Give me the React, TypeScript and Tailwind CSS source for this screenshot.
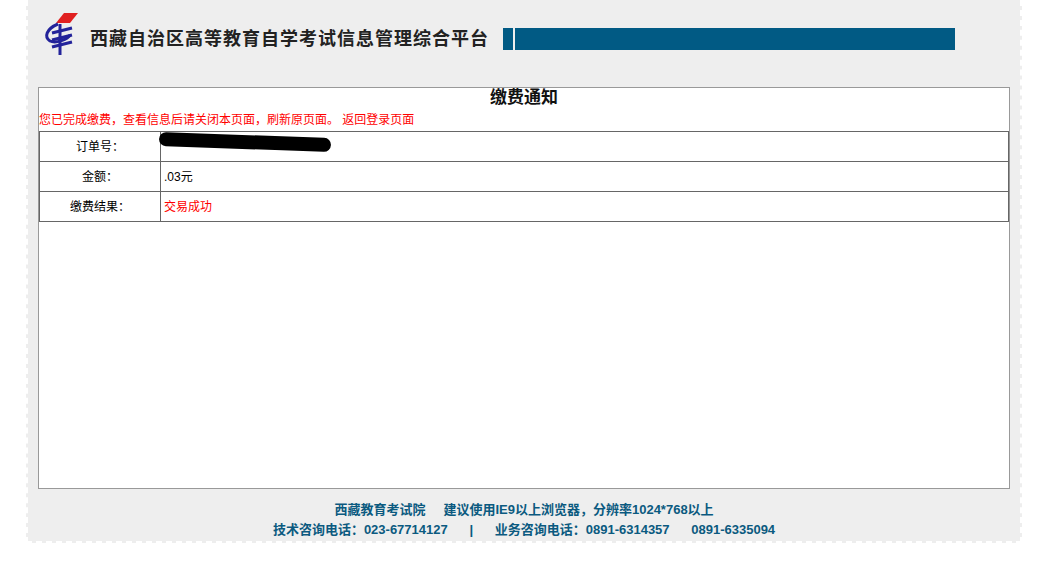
import React from 'react';

const Logo = () => (
  <svg width="40" height="46" viewBox="0 0 40 46">
    <path d="M14 12 L22 2 L36 2 L28 12 Z" fill="#e02020" />
    <path d="M16 13 C4 18 2 26 8 30 C14 33 26 28 28 24" fill="none" stroke="#23239a" strokeWidth="3" />
    <path d="M10 22 L30 17 M10 29 L30 24 M10 36 L30 31" stroke="#23239a" strokeWidth="3" />
    <path d="M18 13 L18 44" stroke="#23239a" strokeWidth="3" />
  </svg>
);

const rows = [
  { k: '订单号：', v: null },
  { k: '金额：', v: <span className="text-black">.03元</span> },
  { k: '缴费结果：', v: <span className="text-[#ff0000]">交易成功</span> },
];

export default function App() {
  return (
    <div className="w-[1053px] h-[565px] bg-white" style={{ fontFamily: '"Liberation Sans", "Noto Sans CJK SC", sans-serif' }}>
      <div className="ml-[26px] w-[996px] h-[543px] bg-[#eeeeee] border-x-2 border-b-2 border-dashed border-white flex flex-col">
        <div className="h-[87px] flex items-start">
          <div className="ml-[14px] mt-[11px]"><Logo /></div>
          <div className="mt-[26px] ml-[8px] text-[18px] font-bold tracking-[1px] text-[#222]">西藏自治区高等教育自学考试信息管理综合平台</div>
          <div className="mt-[28px] ml-[14px] h-[22px] w-[10px] bg-[#015a84]" />
          <div className="mt-[28px] ml-[2px] h-[22px] w-[440px] bg-[#015a84]" />
        </div>
        <div className="ml-[10px] w-[972px] h-[402px] bg-white border border-[#999]">
          <div className="text-center font-bold text-[17px] leading-[20px] mt-[0px] pt-[0px] text-[#111]" style={{ fontFamily: '"Liberation Serif", "Noto Sans CJK SC", serif' }}>缴费通知</div>
          <div className="text-[12px] leading-[16px] mt-[4px] text-[#ff0000]">您已完成缴费，查看信息后请关闭本页面，刷新原页面。 返回登录页面</div>
          <table className="w-full border-collapse text-[12px] mt-[3px]">
            <tbody>
              {rows.map((r, i) => (
                <tr key={i} className="h-[30px]">
                  <td className="w-[121px] border border-[#666] text-center text-black">{r.k}</td>
                  <td className="border border-[#666] pl-[3px] relative">
                    {r.v ?? (
                      <div className="absolute left-[-2px] top-[3px] w-[172px] h-[14px] bg-black rounded-full rotate-[2deg]" />
                    )}
                  </td>
                </tr>
              ))}
            </tbody>
          </table>
        </div>
        <div className="mt-[11px] text-center font-bold text-[13px] leading-[20px] text-[#0b5a80]">
          <div>西藏教育考试院&nbsp;&nbsp;&nbsp;&nbsp;&nbsp;建议使用IE9以上浏览器，分辨率1024*768以上</div>
          <div className="whitespace-pre">技术咨询电话：023-67714127      |      业务咨询电话：0891-6314357      0891-6335094</div>
        </div>
      </div>
    </div>
  );
}
